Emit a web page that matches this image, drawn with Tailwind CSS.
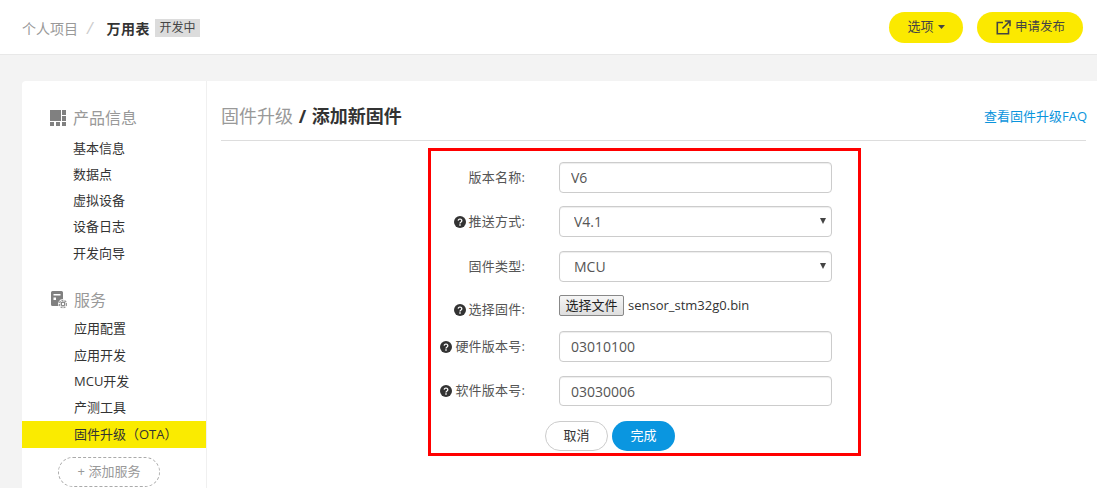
<!DOCTYPE html>
<html lang="zh">
<head>
<meta charset="utf-8">
<title>固件升级</title>
<script src="https://cdn.jsdelivr.net/npm/@tailwindcss/browser@4"></script>
</head>
<body class="h-[488px] overflow-hidden bg-[#f3f3f3] font-['Open_Sans','Noto_Sans_CJK_SC',sans-serif] text-[13px] text-[#333]">
<header class="flex h-[55px] items-center justify-between border-b border-[#e8e8e8] bg-white pl-[22px] pr-[14px]">
  <div class="flex items-center pt-[2px] text-[14px]">
    <span class="text-[#999]">个人项目</span>
    <span class="ml-[9px] text-[16px] italic leading-none text-[#ccc]">/</span>
    <span class="ml-[14px] font-bold tracking-[0.5px] text-[#333]">万用表</span>
    <span class="ml-[5px] flex h-[18px] w-[45px] items-center justify-center bg-[#dcdcdc] text-[12px] text-[#444]">开发中</span>
  </div>
  <div class="flex items-center gap-[14px]">
    <button class="flex h-[31px] w-[74px] items-center justify-center gap-[4px] rounded-full bg-[#fbe900] text-[13px] text-[#444]">选项
      <svg width="7" height="4" viewBox="0 0 7 4"><path d="M0 0h7L3.500 4z" fill="#444"/></svg>
    </button>
    <button class="flex h-[31px] w-[106px] items-center justify-center gap-[4px] rounded-full bg-[#fbe900] pl-[1px] text-[12.500px] text-[#444]">
      <svg width="15" height="15" viewBox="0 0 15 15" fill="none" stroke="#444" stroke-width="1.600"><path d="M7 2.500H1.300v11.200h11.200V8M6.500 8.500 13.500 1.500M8.800 1h5.200v5.200"/></svg>
      申请发布
    </button>
  </div>
</header>
<main class="ml-[22px] mt-[26px] flex h-[407px] rounded-tl-[4px] bg-white">
  <nav class="w-[184px] shrink-0 pt-[26px]">
    <h2 class="flex h-[22px] items-center gap-[7px] pl-[28px] text-[16px] text-[#999]">
      <svg width="16" height="16" viewBox="0 0 16 16" fill="#808080"><path d="M0 0h11v11H0zM12 0h4v5h-4zM12 6h4v5h-4zM0 12h4v4H0zM6 12h4v4H6zM12 12h4v4h-4z"/></svg>
      产品信息
    </h2>
    <ul class="mt-[5.500px] text-[13px] leading-[26.250px] text-[#333]">
      <li class="pl-[51px]">基本信息</li>
      <li class="pl-[51px]">数据点</li>
      <li class="pl-[51px]">虚拟设备</li>
      <li class="pl-[51px]">设备日志</li>
      <li class="pl-[51px]">开发向导</li>
    </ul>
    <h2 class="mt-[23px] flex h-[22px] items-center gap-[7px] pl-[29px] text-[16px] text-[#999]">
      <svg width="16" height="18" viewBox="0 0 16 18"><path d="M0 1.500A1.500 1.500 0 0 1 1.500 0h9A1.500 1.500 0 0 1 12 1.500V8a5 5 0 0 0-4.500 7H1.500A1.500 1.500 0 0 1 0 13.500z" fill="#808080"/><path d="M2.500 3h7v1.500h-7zM2.500 6.500h2.500v2.500h-2.500z" fill="#fff"/><circle cx="12" cy="13" r="3.600" fill="none" stroke="#999" stroke-width="1.500" stroke-dasharray="2 1"/><circle cx="12" cy="13" r="1.800" fill="none" stroke="#808080" stroke-width="1.200"/></svg>
      服务
    </h2>
    <ul class="mt-[4.500px] text-[13px] leading-[26.250px] text-[#333]">
      <li class="pl-[52px]">应用配置</li>
      <li class="pl-[52px]">应用开发</li>
      <li class="pl-[52px]">MCU开发</li>
      <li class="pl-[52px]">产测工具</li>
      <li class="mt-[0.500px] bg-[#faeb00] pl-[52px] leading-[27px]">固件升级（OTA）</li>
    </ul>
    <button class="ml-[36px] mt-[9px] h-[30px] w-[102px] rounded-full border border-dashed border-[#aaa] text-[13px] text-[#999]">+ 添加服务</button>
  </nav>
  <section class="flex-1 border-l border-[#f0f0f0] pl-[14px] pr-[11px]">
    <div class="flex h-[60px] items-center justify-between border-b border-[#ddd] pt-[12px]">
      <h1 class="text-[18px] font-bold text-[#333]"><span class="font-normal text-[#999]">固件升级</span> <span class="ml-[1px] mr-[1px] inline-block">/</span> 添加新固件</h1>
      <a class="-mr-[1px] text-[13px] text-[#0a94dc]">查看固件升级FAQ</a>
    </div>
    <form class="ml-[207px] mt-[7px] h-[308px] w-[433px] border-[3px] border-[#ff0000] pt-[11px]">
      <div class="mb-[13px] flex h-[31px] items-center">
        <label class="flex w-[95px] items-center justify-end pr-[1px] text-[13px] tracking-[0.2px] text-[#555]">版本名称:</label>
        <input class="ml-[33px] h-full w-[273px] rounded-[4px] border border-[#ccc] px-[11px] text-[14px] text-[#555] shadow-[inset_0_1px_1px_rgba(0,0,0,0.075)]" value="V6">
      </div>
      <div class="mb-[14px] flex h-[31px] items-center">
        <label class="flex w-[95px] items-center justify-end gap-[3px] pr-[1px] text-[13px] tracking-[0.2px] text-[#555]">
          <svg width="12" height="12" viewBox="0 0 12 12"><circle cx="6" cy="6" r="6" fill="#333"/><path d="M4.200 4.600a1.800 1.600 0 1 1 2.800 1.400c-.7.500-1 .8-1 1.400" fill="none" stroke="#fff" stroke-width="1.300"/><path d="M5.300 8.300h1.400v1.400H5.300z" fill="#fff"/></svg>
          推送方式:</label>
        <div class="relative ml-[33px] h-full w-[273px]">
          <select class="h-full w-full appearance-none rounded-[4px] border border-[#ccc] bg-white px-[14px] text-[14px] text-[#555] shadow-[inset_0_1px_1px_rgba(0,0,0,0.075)]"><option>V4.1</option></select>
          <svg class="pointer-events-none absolute right-[6px] top-[12px]" width="6" height="6" viewBox="0 0 6 6"><path d="M0 0h6L3 6z" fill="#444"/></svg>
        </div>
      </div>
      <div class="mb-[13px] flex h-[31px] items-center">
        <label class="flex w-[95px] items-center justify-end pr-[1px] text-[13px] tracking-[0.2px] text-[#555]">固件类型:</label>
        <div class="relative ml-[33px] h-full w-[273px]">
          <select class="h-full w-full appearance-none rounded-[4px] border border-[#ccc] bg-white px-[14px] text-[14px] text-[#555] shadow-[inset_0_1px_1px_rgba(0,0,0,0.075)]"><option>MCU</option></select>
          <svg class="pointer-events-none absolute right-[6px] top-[12px]" width="6" height="6" viewBox="0 0 6 6"><path d="M0 0h6L3 6z" fill="#444"/></svg>
        </div>
      </div>
      <div class="mb-[15px] flex h-[21px] items-start">
        <label class="mt-[5px] flex w-[95px] items-center justify-end gap-[3px] pr-[1px] text-[13px] tracking-[0.2px] text-[#555]">
          <svg width="12" height="12" viewBox="0 0 12 12"><circle cx="6" cy="6" r="6" fill="#333"/><path d="M4.200 4.600a1.800 1.600 0 1 1 2.800 1.400c-.7.500-1 .8-1 1.400" fill="none" stroke="#fff" stroke-width="1.300"/><path d="M5.300 8.300h1.400v1.400H5.300z" fill="#fff"/></svg>
          选择固件:</label>
        <button type="button" class="ml-[33px] h-[21px] w-[65px] rounded-[2px] border border-[#888] bg-gradient-to-b from-[#f6f6f6] to-[#dedede] text-[13px] leading-none text-[#222]">选择文件</button>
        <span class="ml-[4px] text-[13px] leading-[21px] text-[#333]">sensor_stm32g0.bin</span>
      </div>
      <div class="mb-[14px] flex h-[31px] items-center">
        <label class="flex w-[95px] items-center justify-end gap-[3px] pr-[1px] text-[13px] tracking-[0.2px] text-[#555]">
          <svg width="12" height="12" viewBox="0 0 12 12"><circle cx="6" cy="6" r="6" fill="#333"/><path d="M4.200 4.600a1.800 1.600 0 1 1 2.800 1.400c-.7.500-1 .8-1 1.400" fill="none" stroke="#fff" stroke-width="1.300"/><path d="M5.300 8.300h1.400v1.400H5.300z" fill="#fff"/></svg>
          硬件版本号:</label>
        <input class="ml-[33px] h-full w-[273px] rounded-[4px] border border-[#ccc] px-[11px] text-[14px] text-[#555] shadow-[inset_0_1px_1px_rgba(0,0,0,0.075)]" value="03010100">
      </div>
      <div class="mb-[15px] flex h-[30px] items-center">
        <label class="flex w-[95px] items-center justify-end gap-[3px] pr-[1px] text-[13px] tracking-[0.2px] text-[#555]">
          <svg width="12" height="12" viewBox="0 0 12 12"><circle cx="6" cy="6" r="6" fill="#333"/><path d="M4.200 4.600a1.800 1.600 0 1 1 2.800 1.400c-.7.500-1 .8-1 1.400" fill="none" stroke="#fff" stroke-width="1.300"/><path d="M5.300 8.300h1.400v1.400H5.300z" fill="#fff"/></svg>
          软件版本号:</label>
        <input class="ml-[33px] h-full w-[273px] rounded-[4px] border border-[#ccc] px-[11px] text-[14px] text-[#555] shadow-[inset_0_1px_1px_rgba(0,0,0,0.075)]" value="03030006">
      </div>
      <div class="flex gap-[4px] pl-[114px]">
        <button type="button" class="h-[30px] w-[63px] rounded-full border border-[#ccc] bg-white text-[13px] text-[#333]">取消</button>
        <button type="button" class="h-[30px] w-[63px] rounded-full bg-[#0a96e0] text-[13px] text-white">完成</button>
      </div>
    </form>
  </section>
</main>
</body>
</html>
